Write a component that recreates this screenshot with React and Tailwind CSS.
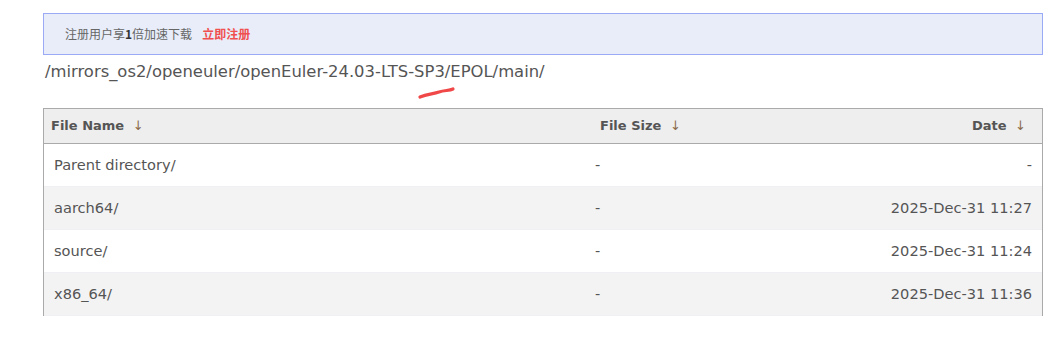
import React from "react";

const rows = [
  { name: "Parent directory/", size: "-", date: "-" },
  { name: "aarch64/", size: "-", date: "2025-Dec-31 11:27" },
  { name: "source/", size: "-", date: "2025-Dec-31 11:24" },
  { name: "x86_64/", size: "-", date: "2025-Dec-31 11:36" },
];

export default function App() {
  return (
    <div className="w-[1056px] h-[359px] bg-white" style={{ fontFamily: '"DejaVu Sans", Verdana, sans-serif' }}>
      <div className="ml-[43px] w-[1000px] pt-[13px]">
        <div
          className="h-[42px] border border-[#9aaaf5] bg-[#e8edf9] flex items-center pl-[21px] text-[12px] text-[#666]"
          style={{ fontFamily: '"Noto Sans CJK SC", "DejaVu Sans", sans-serif' }}
        >
          <span>注册用户享<b className="text-[#333]">1</b>倍加速下载</span>
          <span className="ml-[10px] text-[#f0504f] font-bold">立即注册</span>
        </div>
        <div className="relative h-[53px] pl-[2px] pt-[6px] text-[16.4px] text-[#555] leading-[22px]">
          /mirrors_os2/openeuler/openEuler-24.03-LTS-SP3/EPOL/main/
          <svg className="absolute left-[374px] top-[31px]" width="40" height="14" viewBox="0 0 40 14">
            <path d="M3 11 C 10 8, 16 8, 22 6 S 32 5, 36 3" stroke="#f04848" strokeWidth="3.2" fill="none" strokeLinecap="round" />
          </svg>
        </div>
        <div className="border-l border-r border-[#aaa]">
          <div className="h-[36px] bg-[#eee] border-t border-b border-[#aaa] flex items-center text-[13px] font-bold text-[#555]">
            <div className="w-[549px] pl-[7px]">File Name <span className="ml-[4px] font-normal text-[#8a6a4a]">↓</span></div>
            <div className="w-[200px] pl-[7px]">File Size <span className="ml-[4px] font-normal text-[#8a6a4a]">↓</span></div>
            <div className="flex-1 text-right pr-[16px]">Date <span className="ml-[4px] font-normal text-[#8a6a4a]">↓</span></div>
          </div>
          {rows.map((r, i) => (
            <div
              key={i}
              className={`h-[43px] flex items-center text-[14.6px] text-[#555] border-b border-[#eef0f3] ${i % 2 === 1 ? "bg-[#f3f3f4]" : "bg-white"}`}
            >
              <div className="w-[549px] pl-[10px]">{r.name}</div>
              <div className="w-[200px] pl-[2px]">{r.size}</div>
              <div className="flex-1 text-right pr-[10px]">{r.date}</div>
            </div>
          ))}
        </div>
      </div>
    </div>
  );
}
